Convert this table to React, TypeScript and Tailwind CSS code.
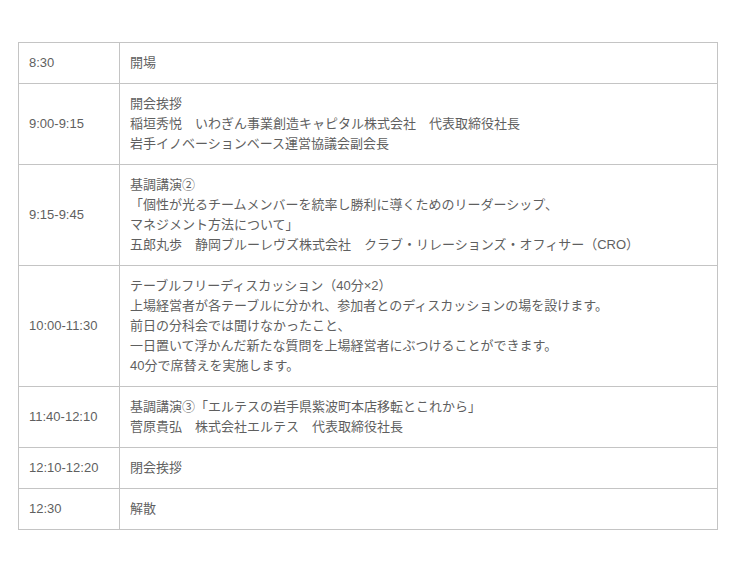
const rows: { time: string; lines: string[] }[] = [
  { time: '8:30', lines: ['開場'] },
  {
    time: '9:00-9:15',
    lines: ['開会挨拶', '稲垣秀悦　いわぎん事業創造キャピタル株式会社　代表取締役社長', '岩手イノベーションベース運営協議会副会長'],
  },
  {
    time: '9:15-9:45',
    lines: [
      '基調講演②',
      '「個性が光るチームメンバーを統率し勝利に導くためのリーダーシップ、',
      'マネジメント方法について」',
      '五郎丸歩　静岡ブルーレヴズ株式会社　クラブ・リレーションズ・オフィサー（CRO）',
    ],
  },
  {
    time: '10:00-11:30',
    lines: [
      'テーブルフリーディスカッション（40分×2）',
      '上場経営者が各テーブルに分かれ、参加者とのディスカッションの場を設けます。',
      '前日の分科会では聞けなかったこと、',
      '一日置いて浮かんだ新たな質問を上場経営者にぶつけることができます。',
      '40分で席替えを実施します。',
    ],
  },
  {
    time: '11:40-12:10',
    lines: ['基調講演③「エルテスの岩手県紫波町本店移転とこれから」', '菅原貴弘　株式会社エルテス　代表取締役社長'],
  },
  { time: '12:10-12:20', lines: ['閉会挨拶'] },
  { time: '12:30', lines: ['解散'] },
]

export default function App() {
  return (
    <div className="bg-white w-[740px] h-[570px] pt-[42px] pl-[18px] font-['Liberation_Sans','Noto_Sans_CJK_JP',sans-serif] text-[13px] leading-[20px] text-[#5f5f5f]">
      <table className="w-[700px] border-collapse">
        <tbody>
          {rows.map(r => (
            <tr key={r.time}>
              <td className="w-[101px] border border-[#c4c4c4] px-[10px] py-[10px] align-middle">{r.time}</td>
              <td className="border border-[#c4c4c4] px-[10px] py-[10px] align-middle">
                {r.lines.map((l, i) => (
                  <div key={i}>{l}</div>
                ))}
              </td>
            </tr>
          ))}
        </tbody>
      </table>
    </div>
  )
}
